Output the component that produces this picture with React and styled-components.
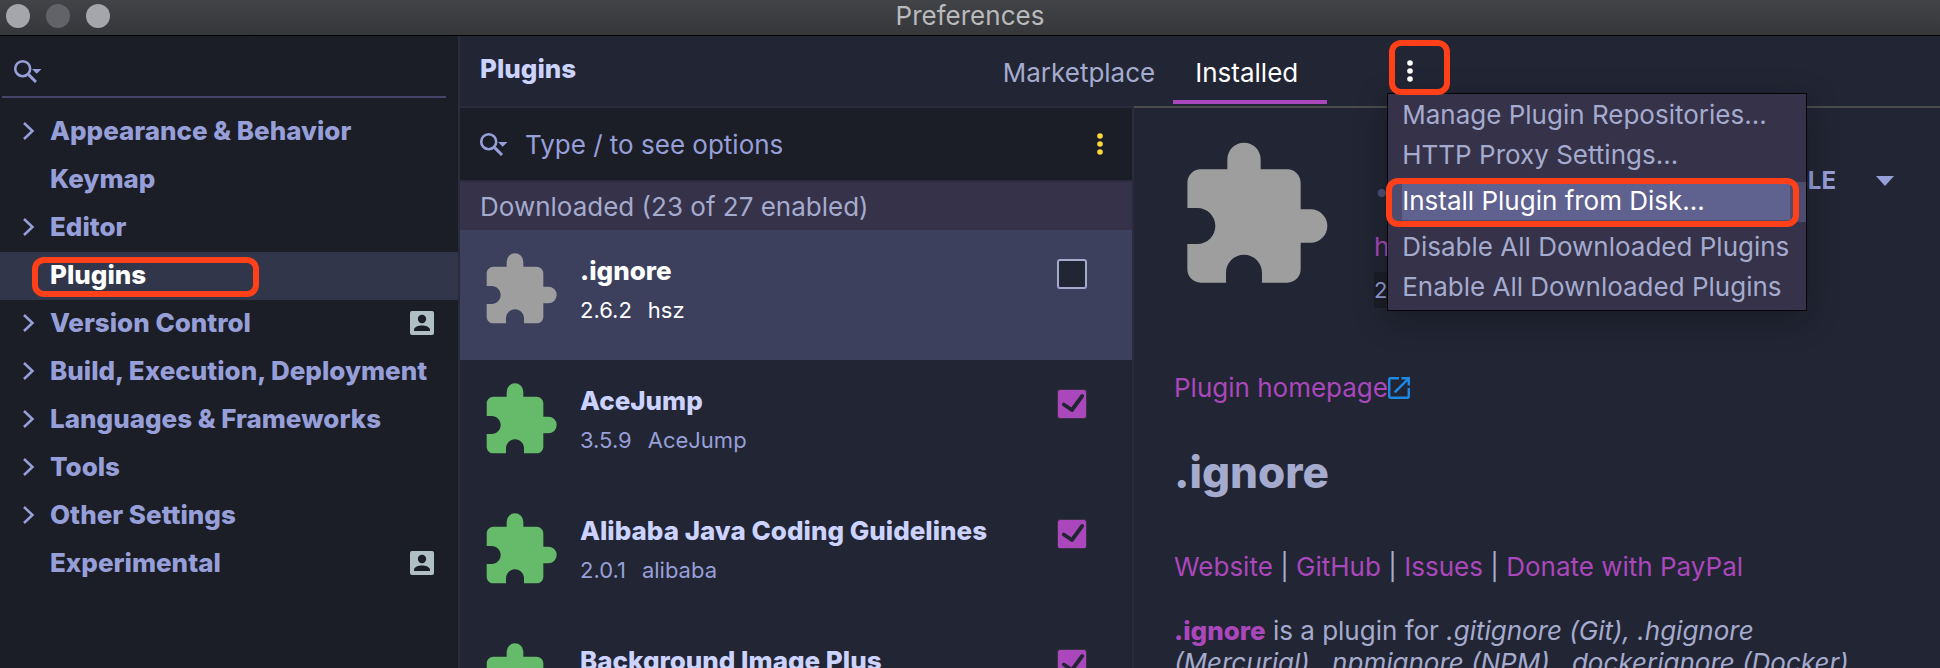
import React from "react";
import styled, { createGlobalStyle, css } from "styled-components";

const color = {
  base: "#222533",
  deep: "#1b1d27",
  line: "#2c2b3d",
  rule: "#4c4c4d",
  panel: "#353249",
  rowActive: "#3c405d",
  navActive: "#31364a",
  text: "#a5abce",
  soft: "#979fd9",
  bright: "#ccd3ff",
  purple: "#ab47bc",
  mark: "#ff4019",
};

const GlobalStyle = createGlobalStyle`
  *, *::before, *::after { box-sizing: border-box; }
  body {
    margin: 0;
    background: ${color.base};
    font-family: Inter, "Noto Sans", sans-serif;
    font-size: 26px;
    line-height: 32px;
  }
  button, input { font: inherit; }
  h1, h2, h3, p, ul { margin: 0; padding: 0; }
  h1, h2, h3, b { font-weight: 800; }
  a { color: ${color.purple}; text-decoration: none; }
  svg { display: block; flex: none; }
`;

const resetButton = css`
  border: 0;
  margin: 0;
  padding: 0;
  background: none;
  cursor: pointer;
`;

const Window = styled.div`
  display: flex;
  flex-direction: column;
  height: 100vh;
  overflow: hidden;
`;

const TitleBar = styled.header`
  display: grid;
  grid-template-columns: 1fr auto 1fr;
  align-items: center;
  flex: none;
  padding: 0 6px 6px;
  height: 36px;
  color: #b9babc;
  background: linear-gradient(#424347, #36373b);
  border-bottom: 1px solid #000;
`;

const Lights = styled.div`
  display: flex;
  gap: 16px;
`;

const Light = styled.button`
  ${resetButton}
  width: 24px;
  height: 24px;
  border-radius: 50%;
  background: ${(p) => (p.$dim ? "#626368" : "#a4a6ab")};
`;

const Body = styled.div`
  display: grid;
  grid-template-columns: 460px minmax(0, 1fr);
  flex: 1;
  min-height: 0;
`;

const Sidebar = styled.aside`
  display: flex;
  flex-direction: column;
  background: ${color.deep};
  border-right: 2px solid ${color.line};
`;

const SidebarSearch = styled.label`
  display: flex;
  align-items: center;
  height: 62px;
  margin: 0 12px 10px 2px;
  padding: 10px 0 0 11px;
  border-bottom: 2px solid #47446a;
`;

const TextInput = styled.input`
  flex: 1;
  min-width: 0;
  border: 0;
  padding: 2px 0 0;
  background: none;
  color: ${color.soft};
  outline: none;
  &::placeholder {
    color: ${color.soft};
    opacity: 1;
  }
`;

const NavItem = styled.a`
  position: relative;
  display: grid;
  grid-template-columns: 28px 1fr auto;
  align-items: center;
  height: 48px;
  padding: 0 24px 2px 22px;
  font-weight: 800;
  white-space: nowrap;
  color: ${(p) => (p.$active ? "#fff" : color.soft)};
  background: ${(p) => (p.$active ? color.navActive : "transparent")};
`;

const Callout = styled.span`
  position: absolute;
  z-index: 3;
  border: 6px solid ${color.mark};
  border-radius: 12px;
  pointer-events: none;
`;

const NavCallout = styled(Callout)`
  inset: 5px 199px 3px 32px;
`;

const MenuButtonCallout = styled(Callout)`
  left: -12px;
  top: 4px;
  width: 61px;
  height: 55px;
`;

const MenuItemCallout = styled(Callout)`
  inset: -4px 7px -5px -2px;
`;

const Main = styled.main`
  display: flex;
  flex-direction: column;
  min-width: 0;
  min-height: 0;
`;

const Header = styled.div`
  display: grid;
  grid-template-columns: 1fr auto 1fr;
  flex: none;
  height: 70px;
  padding: 0 20px;
`;

const Heading = styled.h1`
  align-self: center;
  padding-bottom: 4px;
  font-size: 26px;
  color: ${color.bright};
`;

const Tabs = styled.nav`
  display: flex;
`;

const Tab = styled.button`
  ${resetButton}
  min-width: 154px;
  margin-bottom: 2px;
  padding: 10px 18px 0 22px;
  text-align: left;
  color: ${(p) => (p.$active ? "#fff" : color.text)};
  border-bottom: 4px solid ${(p) => (p.$active ? color.purple : "transparent")};
`;

const MenuAnchor = styled.div`
  position: relative;
  display: flex;
  align-items: center;
  margin-left: 74px;
`;

const IconButton = styled.button`
  ${resetButton}
  color: ${(p) => p.$tone};
`;

const Menu = styled.ul`
  position: absolute;
  z-index: 2;
  top: 57px;
  left: -14px;
  min-width: 420px;
  padding: 2px 0;
  list-style: none;
  background: ${color.panel};
  border: 1px solid #050508;
  box-shadow: 0 8px 28px rgba(10, 10, 16, 0.35);
`;

const MenuItem = styled.li`
  position: relative;
  padding: 2px 16px 2px 14px;
  background: ${(p) => (p.$active ? "#4d4b6e" : "transparent")};
  margin: ${(p) => (p.$active ? "6px 0" : "0")};
`;

const MenuAction = styled.button`
  ${resetButton}
  display: block;
  width: 100%;
  height: 36px;
  padding-bottom: 2px;
  text-align: left;
  white-space: nowrap;
  color: ${(p) => (p.$active ? "#fff" : color.text)};
  background: ${(p) => (p.$active ? "#5f618f" : "transparent")};
`;

const Columns = styled.div`
  display: grid;
  grid-template-columns: minmax(0, 674fr) minmax(0, 806fr);
  flex: 1;
  min-height: 0;
`;

const ListPane = styled.section`
  overflow: hidden;
  border-top: 2px solid ${color.line};
  border-right: 2px solid ${color.line};
`;

const ListSearch = styled.div`
  display: flex;
  align-items: center;
  height: 74px;
  padding: 0 23px 0 19px;
  background: ${color.deep};
  border-bottom: 2px solid ${color.line};
`;

const SearchLabel = styled.label`
  display: flex;
  align-items: center;
  flex: 1;
  gap: 18px;
`;

const GroupTitle = styled.h2`
  padding: 9px 20px 7px;
  font-size: 26px;
  font-weight: 400;
  line-height: 32px;
  color: ${color.text};
  background: ${color.panel};
`;

const PluginRow = styled.article`
  display: flex;
  align-items: flex-start;
  gap: 20px;
  height: 130px;
  padding: 20px 46px 0 20px;
  background: ${(p) => (p.$active ? color.rowActive : "transparent")};
`;

const PluginInfo = styled.div`
  flex: 1;
  min-width: 0;
  white-space: nowrap;
`;

const PluginName = styled.h3`
  font-size: 26px;
  line-height: 42px;
  color: ${(p) => (p.$active ? "#fff" : color.bright)};
`;

const PluginMeta = styled.p`
  display: flex;
  gap: 16px;
  font-size: 22px;
  line-height: 36px;
  color: ${(p) => (p.$active ? "#fff" : color.soft)};
`;

const CheckWrap = styled.label`
  position: relative;
  display: block;
  width: 28px;
  height: 28px;
  margin-top: 10px;
  svg {
    position: absolute;
    inset: 0;
    pointer-events: none;
  }
`;

const CheckInput = styled.input`
  appearance: none;
  display: block;
  width: 28px;
  height: 28px;
  margin: 0;
  border: 1px solid ${color.text};
  border-radius: 2px;
  background: ${color.base};
  box-shadow: 0 0 0 1px ${color.text};
  &:checked {
    border-color: ${color.purple};
    background: ${color.purple};
    box-shadow: 0 0 0 1px #3b3145;
  }
  & + svg { display: none; }
  &:checked + svg { display: block; }
`;

const Detail = styled.section`
  overflow: hidden;
  padding: 28px 46px 0 40px;
  color: ${color.text};
  border-top: 2px solid ${color.rule};
`;

const DetailTop = styled.div`
  display: flex;
  align-items: flex-start;
`;

const DetailInfo = styled.div`
  display: flex;
  flex-direction: column;
  align-items: flex-start;
  flex: 1;
  margin-left: 40px;
`;

const DetailName = styled.h2`
  font-size: 44px;
  line-height: 90px;
  color: #4f5373;
`;

const Vendor = styled.a`
  line-height: 42px;
`;

const Version = styled.span`
  margin-top: 4px;
  padding-right: 6px;
  font-size: 22px;
  line-height: 36px;
  color: ${color.soft};
  background: ${color.deep};
`;

const Actions = styled.div`
  display: flex;
  align-items: center;
  gap: 40px;
  height: 90px;
`;

const DisableButton = styled.button`
  ${resetButton}
  font-size: 24px;
  font-weight: 700;
  color: ${color.soft};
`;

const Homepage = styled.a`
  display: flex;
  align-items: center;
  width: max-content;
  margin-top: 64px;
`;

const ArticleTitle = styled.h2`
  margin-top: 40px;
  font-size: 44px;
  line-height: 56px;
`;

const Links = styled.p`
  margin-top: 51px;
`;

const Description = styled.p`
  margin: 32px 20px 0 0;
`;

function SearchIcon() {
  return (
    <svg width="28" height="24" viewBox="0 0 28 24" fill="none" stroke={color.soft} strokeWidth="2.6" aria-hidden="true">
      <circle cx="9.7" cy="9.7" r="7.5" />
      <path d="M15.6 15.6 23 23" strokeWidth="3" />
      <path d="M19 10h9.4l-4.7 4.8z" fill={color.soft} stroke="none" />
    </svg>
  );
}

function Chevron() {
  return (
    <svg width="13" height="18" viewBox="0 0 13 18" fill="none" stroke={color.soft} strokeWidth="2.5" aria-hidden="true">
      <path d="M2 1l8.5 8L2 17" />
    </svg>
  );
}

function ProjectBadge() {
  return (
    <svg width="24" height="24" viewBox="0 0 24 24" aria-hidden="true">
      <rect width="24" height="24" rx="2" fill="#b0bec5" />
      <circle cx="12" cy="8" r="4.2" fill={color.deep} />
      <path d="M4 20v-1.4c0-2.7 4.6-4.2 8-4.2s8 1.5 8 4.2V20z" fill={color.deep} />
    </svg>
  );
}

function DotsIcon() {
  return (
    <svg width="18" height="24" viewBox="0 0 18 24" fill="currentColor" aria-hidden="true">
      <circle cx="9" cy="4" r="2.8" />
      <circle cx="9" cy="12" r="2.8" />
      <circle cx="9" cy="20" r="2.8" />
    </svg>
  );
}

function PuzzleIcon({ size, fill }) {
  return (
    <svg width={size} height={size} viewBox="0 0 24 24" fill={fill} aria-hidden="true">
      <path d="M20.5 11H19V7c0-1.1-.9-2-2-2h-4V3.5a2.5 2.5 0 0 0-5 0V5H4c-1.1 0-1.99.9-1.99 2v3.8H3.5c1.49 0 2.7 1.21 2.7 2.7s-1.21 2.7-2.7 2.7H2V20c0 1.1.9 2 2 2h3.8v-1.5c0-1.49 1.21-2.7 2.7-2.7s2.7 1.21 2.7 2.7V22H17c1.1 0 2-.9 2-2v-4h1.5a2.5 2.5 0 0 0 0-5z" />
    </svg>
  );
}

function CheckMark() {
  return (
    <svg width="28" height="28" viewBox="0 0 28 28" fill="none" stroke={color.base} strokeWidth="3.8" strokeLinecap="round" strokeLinejoin="round" aria-hidden="true">
      <path d="M5.8 14.5 13.9 20 24.2 6" />
    </svg>
  );
}

function ExternalIcon() {
  return (
    <svg width="22" height="22" viewBox="3 3 18 18" fill="#1e88e5" aria-hidden="true">
      <path d="M19 19H5V5h7V3H5a2 2 0 0 0-2 2v14a2 2 0 0 0 2 2h14c1.1 0 2-.9 2-2v-7h-2v7zM14 3v2h3.59l-9.83 9.83 1.41 1.41L19 6.41V10h2V3h-7z" />
    </svg>
  );
}

function ArrowIcon() {
  return (
    <svg width="18" height="10" viewBox="0 0 18 10" fill={color.soft} aria-hidden="true">
      <path d="M0 0h18L9 10z" />
    </svg>
  );
}

const navItems = [
  { label: "Appearance & Behavior", expandable: true },
  { label: "Keymap" },
  { label: "Editor", expandable: true },
  { label: "Plugins", active: true },
  { label: "Version Control", expandable: true, badge: true },
  { label: "Build, Execution, Deployment", expandable: true },
  { label: "Languages & Frameworks", expandable: true },
  { label: "Tools", expandable: true },
  { label: "Other Settings", expandable: true },
  { label: "Experimental", badge: true },
];

const menuItems = [
  { label: "Manage Plugin Repositories..." },
  { label: "HTTP Proxy Settings..." },
  { label: "Install Plugin from Disk...", active: true },
  { label: "Disable All Downloaded Plugins" },
  { label: "Enable All Downloaded Plugins" },
];

const plugins = [
  { name: ".ignore", version: "2.6.2", vendor: "hsz", active: true },
  { name: "AceJump", version: "3.5.9", vendor: "AceJump", enabled: true },
  { name: "Alibaba Java Coding Guidelines", version: "2.0.1", vendor: "alibaba", enabled: true },
  { name: "Background Image Plus", enabled: true },
];

export default function App() {
  return (
    <>
      <GlobalStyle />
      <Window>
        <TitleBar>
          <Lights>
            <Light aria-label="Close" />
            <Light aria-label="Minimize" $dim />
            <Light aria-label="Zoom" />
          </Lights>
          <span>Preferences</span>
        </TitleBar>
        <Body>
          <Sidebar>
            <SidebarSearch>
              <SearchIcon />
              <TextInput type="text" aria-label="Search settings" />
            </SidebarSearch>
            <nav>
              {navItems.map((item) => (
                <NavItem key={item.label} href="#" $active={item.active}>
                  <span>{item.expandable && <Chevron />}</span>
                  <span>{item.label}</span>
                  {item.badge && <ProjectBadge />}
                  {item.active && <NavCallout />}
                </NavItem>
              ))}
            </nav>
          </Sidebar>
          <Main>
            <Header>
              <Heading>Plugins</Heading>
              <Tabs>
                <Tab>Marketplace</Tab>
                <Tab $active>Installed</Tab>
                <MenuAnchor>
                  <IconButton $tone="#fff" aria-label="Plugin settings">
                    <DotsIcon />
                  </IconButton>
                  <MenuButtonCallout />
                  <Menu>
                    {menuItems.map((item) => (
                      <MenuItem key={item.label} $active={item.active}>
                        <MenuAction $active={item.active}>{item.label}</MenuAction>
                        {item.active && <MenuItemCallout />}
                      </MenuItem>
                    ))}
                  </Menu>
                </MenuAnchor>
              </Tabs>
            </Header>
            <Columns>
              <ListPane>
                <ListSearch>
                  <SearchLabel>
                    <SearchIcon />
                    <TextInput type="text" placeholder="Type / to see options" aria-label="Search plugins" />
                  </SearchLabel>
                  <IconButton $tone="#ffd835" aria-label="Filter options">
                    <DotsIcon />
                  </IconButton>
                </ListSearch>
                <GroupTitle>Downloaded (23 of 27 enabled)</GroupTitle>
                {plugins.map((plugin) => (
                  <PluginRow key={plugin.name} $active={plugin.active}>
                    <PuzzleIcon size={80} fill={plugin.enabled ? "#66bb6a" : "#9e9e9e"} />
                    <PluginInfo>
                      <PluginName $active={plugin.active}>{plugin.name}</PluginName>
                      {plugin.version && (
                        <PluginMeta $active={plugin.active}>
                          <span>{plugin.version}</span>
                          <span>{plugin.vendor}</span>
                        </PluginMeta>
                      )}
                    </PluginInfo>
                    <CheckWrap>
                      <CheckInput type="checkbox" defaultChecked={plugin.enabled} aria-label={`Enable ${plugin.name}`} />
                      <CheckMark />
                    </CheckWrap>
                  </PluginRow>
                ))}
              </ListPane>
              <Detail>
                <DetailTop>
                  <PuzzleIcon size={160} fill="#9e9e9e" />
                  <DetailInfo>
                    <DetailName>.ignore</DetailName>
                    <Vendor href="#">hsz</Vendor>
                    <Version>2.6.2</Version>
                  </DetailInfo>
                  <Actions>
                    <DisableButton>DISABLE</DisableButton>
                    <IconButton aria-label="More actions">
                      <ArrowIcon />
                    </IconButton>
                  </Actions>
                </DetailTop>
                <Homepage href="#">
                  Plugin homepage
                  <ExternalIcon />
                </Homepage>
                <ArticleTitle>.ignore</ArticleTitle>
                <Links>
                  <a href="#">Website</a> | <a href="#">GitHub</a> | <a href="#">Issues</a> |{" "}
                  <a href="#">Donate with PayPal</a>
                </Links>
                <Description>
                  <a href="#"><b>.ignore</b></a> is a plugin for{" "}
                  <i>.gitignore (Git), .hgignore (Mercurial), .npmignore (NPM), .dockerignore (Docker),</i>
                </Description>
              </Detail>
            </Columns>
          </Main>
        </Body>
      </Window>
    </>
  );
}
